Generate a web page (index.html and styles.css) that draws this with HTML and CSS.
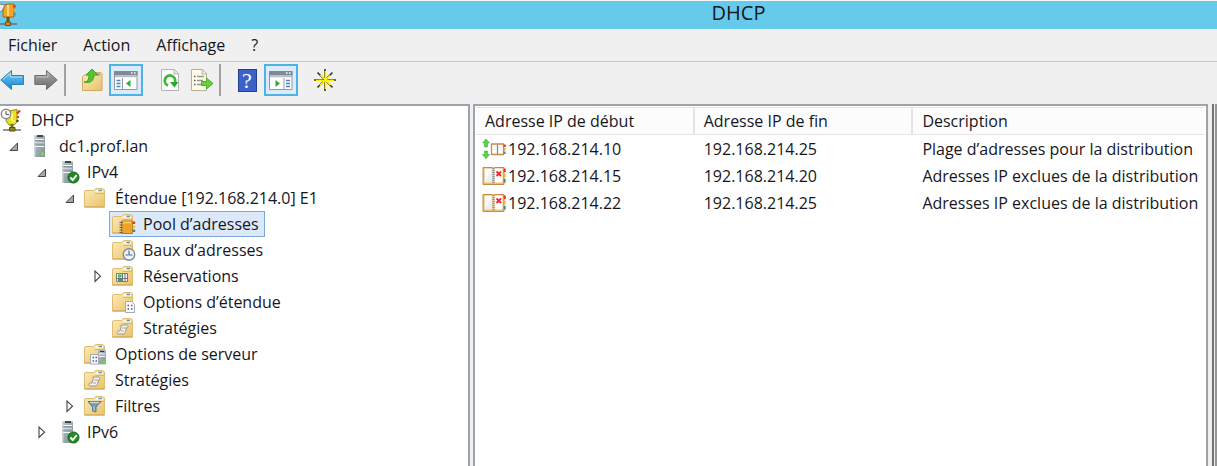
FILE: index.html
```html
<!DOCTYPE html>
<html lang="fr">
<head>
<meta charset="utf-8">
<title>DHCP</title>
<link rel="stylesheet" href="styles.css">
</head>
<body>
<svg class="defs" aria-hidden="true">
  <defs>
    <linearGradient id="gold" x1="0" y1="0" x2="1" y2="1"><stop offset="0" stop-color="#fdebb8"/><stop offset="1" stop-color="#e8c26c"/></linearGradient>
    <linearGradient id="steel" x1="0" y1="0" x2="1" y2="1"><stop offset="0" stop-color="#bcc7cd"/><stop offset="1" stop-color="#7f8e97"/></linearGradient>
    <linearGradient id="blue" x1="0" y1="0" x2="0" y2="1"><stop offset="0" stop-color="#7fd0f8"/><stop offset="1" stop-color="#1482cf"/></linearGradient>
    <linearGradient id="grey" x1="0" y1="0" x2="0" y2="1"><stop offset="0" stop-color="#aaa"/><stop offset="1" stop-color="#6c6c6c"/></linearGradient>
    <symbol id="folder" viewBox="0 0 24 24">
      <path d="M.5 6q0-1.500 1.500-1.500h7.500L11 3q.5-.5 1-.5h7l1.500 1.500v17H.5z" fill="url(#gold)" stroke="#e0bd71"/>
      <path d="M11.500 5h7.500" stroke="#fff8e2" stroke-width="2.400"/><path d="M14.500 4.500h3.500" stroke="#4d9ad8" stroke-width="1.500"/>
      <path d="M11 7.500h9" stroke="#dcb765"/>
      <path d="M.5 21h20" stroke="#cda353"/>
    </symbol>
    <symbol id="tower" viewBox="0 0 24 24">
      <path d="M6 1h11v22H6z" fill="url(#steel)"/><path d="M6 1h1.500v22H6z" fill="#ccd5d9"/>
      <path d="M6 1.500h11" stroke="#d9dfe2"/><path d="M9 2h6" stroke="#1d2427" stroke-width="1.600"/>
      <path d="M7 5.500h9M7 9h9M7 12.500h9" stroke="#f4f8fa" stroke-width="1.200"/>
      <path d="M7 6.500h9M7 10h9" stroke="#7f8d95" stroke-width=".8"/>
      <circle cx="14.500" cy="20" r="1.800" fill="#63ef19"/>
    </symbol>
    <symbol id="tower-ok" viewBox="0 0 24 24">
      <use href="#tower" width="24" height="24"/>
      <circle cx="17.500" cy="17.500" r="5.500" fill="#218c21" stroke="#126512"/><path d="m14.400 17.500 2.300 2.500 4-4.800" fill="none" stroke="#fff" stroke-width="1.900"/>
    </symbol>
    <symbol id="dhcp-title" viewBox="0 0 24 24">
      <path d="M4 2 8 1h6v13H3V9z" fill="#efa62a" stroke="#a66b16"/><path d="M8 2v11" stroke="#ffd66e" stroke-width="2"/>
      <path d="M0 1l5 1-3 6-2 1" fill="#e7edf0" stroke="#74818a"/>
      <path d="M14.500 2v2.500" stroke="#e33" stroke-width="2.400"/><path d="M14.500 6v2.500" stroke="#dabd23" stroke-width="2.400"/><path d="M14.500 10v2.500" stroke="#3d9dad" stroke-width="2.400"/>
      <path d="M8 14v5" stroke="#784b13" stroke-width="3"/><path d="M0 21h17" stroke="#6d7375" stroke-width="1.600"/><path d="M5.500 19h5v3.500h-5z" fill="#d28a19" stroke="#6c501f"/>
    </symbol>
    <symbol id="dhcp" viewBox="0 0 24 24">
      <path d="M8 3 17 1.500v12.500l-3 3H9l-3-4z" fill="#e9df1c" stroke="#938912"/><path d="M12 5v7l3 2" fill="none" stroke="#fff889" stroke-width="2"/>
      <circle cx="6" cy="6" r="4.700" fill="#f7f8f8" stroke="#888" stroke-width="1.400"/><path d="M6 3v3.500h3" fill="none" stroke="#555"/>
      <path d="m17 5.500 3-3" stroke="#ed2525" stroke-width="2.200"/><path d="M17 9h2" stroke="#ee3030" stroke-width="2"/><path d="M16.500 13h2" stroke="#333" stroke-width="2"/>
      <path d="M12 16v4" stroke="#77721b" stroke-width="3"/><path d="M3 22h18" stroke="#888" stroke-width="1.800"/><path d="M9.500 19.500h5.500v3.500H9.500z" fill="#8c8517" stroke="#545017"/>
    </symbol>
    <symbol id="pool" viewBox="0 0 24 24">
      <use href="#folder" width="24" height="24"/>
      <path d="M9.500 9h11v12.500h-11z" fill="#eda32b" stroke="#c47c19"/><path d="M11 10.500h8" stroke="#ffd065" stroke-width="1.600"/>
      <path d="M7.500 10.500h3M7.500 13h3M7.500 15.500h3M7.500 18h3M7.500 20.500h3" stroke="#6b5a45"/>
      <path d="M22 9.500v2.500" stroke="#e33434" stroke-width="2.400"/><path d="M22 13.500V16" stroke="#ebc41c" stroke-width="2.400"/><path d="M22 17.500V20" stroke="#3c88a5" stroke-width="2.400"/>
    </symbol>
    <symbol id="leases" viewBox="0 0 24 24">
      <use href="#folder" width="24" height="24"/>
      <circle cx="17" cy="16.500" r="5.700" fill="#eef5fa" stroke="#7c8c98" stroke-width="1.400"/><path d="M17 12.500v4.500h3.500M13.500 17H16" fill="none" stroke="#486c88" stroke-width="1.200"/>
    </symbol>
    <symbol id="reservations" viewBox="0 0 24 24">
      <use href="#folder" width="24" height="24"/>
      <path d="M4.500 9.500h11v8h-11z" fill="#f6f6ed" stroke="#777e81"/><path d="M6 10.500h3.500v3H6z" fill="#42b84f"/><path d="M5 14.500h10M10.500 10v7M13 10v7" stroke="#6c787d"/><path d="M6 15h4v2H6z" fill="#56829c"/>
    </symbol>
    <symbol id="sheet" viewBox="0 0 24 24">
      <path d="M13.500 11.500h6l3 3v8h-9z" fill="#fbfbff" stroke="#a9a9b6"/><path d="M15.500 15.500H17M19 15.500h1.500M15.500 19H17M19 19h1.500" stroke="#59597f" stroke-width="1.600"/>
    </symbol>
    <symbol id="options" viewBox="0 0 24 24"><use href="#folder" width="24" height="24"/><use href="#sheet" width="24" height="24"/></symbol>
    <symbol id="server-options" viewBox="0 0 24 24">
      <use href="#folder" width="24" height="24"/>
      <path d="M14.500 8.500h7V22h-7z" fill="url(#steel)" stroke="#a0adb4"/><path d="M16 9.500h4" stroke="#2c3438"/><path d="M15 12h6M15 14.500h6" stroke="#f3f7f8"/><circle cx="19.700" cy="20" r="1.500" fill="#5be91b"/>
      <path d="M6.500 12.500h8v9.500h-8z" fill="#fbfbff" stroke="#a9a9b6"/><path d="M8.500 15.500H10M11.500 15.500H13M8.500 19H10M11.500 19H13" stroke="#59597f" stroke-width="1.600"/>
    </symbol>
    <symbol id="policy" viewBox="0 0 24 24">
      <use href="#folder" width="24" height="24"/>
      <path d="M9 9h5.500c2 0 2 3 0 3l-1 3.500c0 2-1 2.500-2.500 2.500H6.500c-2 0-2-3 0-3H8l1-3.500z" fill="#f4f4ed" stroke="#9a968a"/><path d="M10 12h4.500M9 15h3" stroke="#aaa593"/>
    </symbol>
    <symbol id="filter" viewBox="0 0 24 24">
      <use href="#folder" width="24" height="24"/>
      <path d="M4 7.500h13l-5 5.500v5l-3.500-1v-4z" fill="#7899b1" stroke="#587890"/><path d="M6 8.500h9" stroke="#c6dce8" stroke-width="1.400"/><path d="M10 12v5" stroke="#c4d7e1"/>
    </symbol>
    <symbol id="book" viewBox="0 0 24 20">
      <path d="M1 1.500h9.500l1 .7 1-.7H22v17H1z" fill="#f0bd78" stroke="#c98a3c"/><path d="M2.500 2.500h8v14h-8z" fill="#e9f0f2"/><path d="M12.500 2.500h8v14h-8z" fill="#fff"/><path d="M3 3v12l6-9V3z" fill="#fafcfc"/>
      <path d="M11.500 2v16" stroke="#8e9497" stroke-width="2.400" stroke-dasharray="1 1"/><path d="m14.500 5.500 4.500 4.500m0-4.500-4.500 4.500" stroke="#ef2732" stroke-width="1.800"/>
      <path d="M22.700 2.500v3.500" stroke="#ec2929" stroke-width="2"/><path d="M22.700 8v3.500" stroke="#eac12d" stroke-width="2"/><path d="M22.700 13v3.500" stroke="#348eae" stroke-width="2"/>
    </symbol>
    <symbol id="range" viewBox="0 0 24 20">
      <path d="M4 0 .5 4H2.500v4h3V4h2zM2.500 12h3v3.500h2L4 19.800.5 15.500h2z" fill="#61d04a" stroke="#45ad35" stroke-width=".6"/>
      <path d="M9.500 5h12v10.500h-12z" fill="#fff" stroke="#c58a43" stroke-width="1.300"/><path d="M15.500 5.500v9.500" stroke="#858b91" stroke-width="1.300"/><path d="M11.500 8h2M11.500 10h2M17.500 8h2M17.500 10h2" stroke="#dce6ed"/>
      <path d="M22.700 5.500v2.500" stroke="#e43232" stroke-width="2"/><path d="M22.700 9v2.500" stroke="#e2b827" stroke-width="2"/><path d="M22.700 12.500V15" stroke="#3498b8" stroke-width="2"/>
    </symbol>
    <symbol id="collapse" viewBox="0 0 10 12"><path d="M8.500 3v7.500H1z" fill="#a8a8a8" stroke="#444"/></symbol>
    <symbol id="expand" viewBox="0 0 10 14"><path d="M2 2v10.500l5.500-5.300z" fill="#fff" stroke="#444" stroke-width="1.100"/></symbol>
  </defs>
</svg>

<div class="window">
  <header class="titlebar">
    <svg class="icon titlebar-icon" aria-hidden="true"><use href="#dhcp-title"/></svg>
    <h1 class="titlebar-text">DHCP</h1>
  </header>

  <nav class="menubar">
    <button class="menu">Fichier</button>
    <button class="menu">Action</button>
    <button class="menu">Affichage</button>
    <button class="menu">?</button>
  </nav>

  <div class="toolbar">
    <div class="tool-history">
      <button class="tool tool-nav" aria-label="Précédent"><svg class="icon" viewBox="0 0 24 24"><path d="M.8 12 11.500 2.500v5h12v9h-12v5z" fill="url(#blue)" stroke="#2582bd"/><path d="M3 11.500 10.500 5v4H22" fill="none" stroke="#a8e1fb"/></svg></button>
      <button class="tool tool-nav" aria-label="Suivant"><svg class="icon" viewBox="0 0 24 24"><path d="M23.200 12 12.500 2.500v5H.8v9h11.700v5z" fill="url(#grey)" stroke="#707070"/><path d="M2 9h12V5" fill="none" stroke="#c4c4c4"/></svg></button>
    </div>
    <span class="separator"></span>
    <button class="tool" aria-label="Dossier parent"><svg class="icon" viewBox="0 0 24 24"><path d="M2.500 8.500 4 7h8l2-2.500h7l1 1V22.500H2.500z" fill="url(#gold)" stroke="#d2aa5c"/><path d="M16 6.500h4" stroke="#4e9add" stroke-width="1.600"/><path d="M4 14c4 0 5-3 5-7H6l6-6 6 6h-4c0 5-3 9-10 7z" fill="#55c52e" stroke="#3aa32a"/></svg></button>
    <button class="tool tool-on" aria-label="Afficher l'arborescence" aria-pressed="true"><svg class="icon" viewBox="0 0 24 24"><path d="M.5 3.500h22.500v18H.5z" fill="#fff" stroke="#9299a0"/><path d="M0 3h23.500v4.500H0z" fill="#7f8a95"/><path d="M1 8.500h22" stroke="#b6bec6" stroke-width="1.500"/><path d="M8.500 10v11" stroke="#9299a0"/><path d="M2.500 12.500h4M2.500 15.500h4M2.500 18.500h4" stroke="#4982bb" stroke-width="1.400"/><path d="M16.500 12v7L12 15.500z" fill="#2cae2c"/><path d="M17 5h1.500M20 5h1.500" stroke="#fff" stroke-width="1.600"/></svg></button>
    <span class="tool-gap"></span>
    <button class="tool" aria-label="Actualiser"><svg class="icon" viewBox="0 0 24 24"><path d="M3.500 1.500h13l4 4v17h-17z" fill="#fff" stroke="#b4b4b4"/><path d="M16 2v4h4" fill="#e3e3e3" stroke="#b4b4b4"/><path d="M10 17.500A5.200 5.200 0 1 1 17 14" fill="none" stroke="#3ab83a" stroke-width="2.800"/><path d="M12 14h8.500l-4 5.500z" fill="#2aa62e"/></svg></button>
    <button class="tool" aria-label="Exporter la liste"><svg class="icon" viewBox="0 0 24 24"><path d="M1.500 1.500h11l4 4v17h-15z" fill="#fffdea" stroke="#b4b09a"/><path d="M12 2v4h4" fill="#eee" stroke="#b4b09a"/><path d="M4 8.500h1.500M4 12.500h1.500M4 16.500h1.500" stroke="#5a5a5a" stroke-width="1.500"/><path d="M7 8.500h7M7 12.500h6M7 16.500h5" stroke="#969690" stroke-width="1.300"/><path d="M11.500 13.500h5V10l6.500 5.500-6.500 5.500v-3.500h-5z" fill="#65cf36" stroke="#4fb036"/></svg></button>
    <span class="separator"></span>
    <button class="tool tool-help" aria-label="Aide"><span class="help-glyph">?</span></button>
    <button class="tool tool-on" aria-label="Afficher le volet Actions" aria-pressed="true"><svg class="icon" viewBox="0 0 24 24"><path d="M.5 3.500h22.500v18H.5z" fill="#fff" stroke="#9299a0"/><path d="M0 3h23.500v4.500H0z" fill="#7f8a95"/><path d="M1 8.500h22" stroke="#b6bec6" stroke-width="1.500"/><path d="M15 10v11" stroke="#9299a0"/><path d="M17 12.500h4M17 15.500h4M17 18.500h4" stroke="#4982bb" stroke-width="1.400"/><path d="M6.500 12v7l4.500-3.500z" fill="#2cae2c"/><path d="M17 5h1.500M20 5h1.500" stroke="#fff" stroke-width="1.600"/></svg></button>
    <span class="tool-gap"></span>
    <button class="tool" aria-label="Nouvelle étendue"><svg class="icon" viewBox="0 0 24 24"><path d="M12 1v22M1 12h22M4.500 4.500l15 15M19.500 4.500l-15 15" stroke="#3e3c18" stroke-width="1.700"/><path d="M12.500 3v18M3 12.500h18M7.500 7l10 10M17 7.500l-10 10" stroke="#fff200" stroke-width="1.600"/></svg></button>
  </div>

  <main class="panes">
    <section class="pane tree-pane" aria-label="Arborescence">
      <ul class="tree">
        <li>
          <div class="row"><span class="item item-root"><svg class="icon" aria-hidden="true"><use href="#dhcp"/></svg>DHCP</span></div>
          <ul class="tree">
            <li>
              <div class="row"><button class="toggle" aria-label="Réduire"><svg class="arrow-open"><use href="#collapse"/></svg></button><span class="item"><svg class="icon" aria-hidden="true"><use href="#tower"/></svg>dc1.prof.lan</span></div>
              <ul class="tree branch">
                <li>
                  <div class="row"><button class="toggle" aria-label="Réduire"><svg class="arrow-open"><use href="#collapse"/></svg></button><span class="item"><svg class="icon" aria-hidden="true"><use href="#tower-ok"/></svg>IPv4</span></div>
                  <ul class="tree branch">
                    <li>
                      <div class="row"><button class="toggle" aria-label="Réduire"><svg class="arrow-open"><use href="#collapse"/></svg></button><span class="item"><svg class="icon" aria-hidden="true"><use href="#folder"/></svg>Étendue [192.168.214.0] E1</span></div>
                      <ul class="tree branch">
                        <li class="row"><span class="toggle"></span><span class="item item-selected"><svg class="icon" aria-hidden="true"><use href="#pool"/></svg>Pool d’adresses</span></li>
                        <li class="row"><span class="toggle"></span><span class="item"><svg class="icon" aria-hidden="true"><use href="#leases"/></svg>Baux d’adresses</span></li>
                        <li class="row"><button class="toggle" aria-label="Développer"><svg class="arrow-closed"><use href="#expand"/></svg></button><span class="item"><svg class="icon" aria-hidden="true"><use href="#reservations"/></svg>Réservations</span></li>
                        <li class="row"><span class="toggle"></span><span class="item"><svg class="icon" aria-hidden="true"><use href="#options"/></svg>Options d’étendue</span></li>
                        <li class="row"><span class="toggle"></span><span class="item"><svg class="icon" aria-hidden="true"><use href="#policy"/></svg>Stratégies</span></li>
                      </ul>
                    </li>
                    <li class="row"><span class="toggle"></span><span class="item"><svg class="icon" aria-hidden="true"><use href="#server-options"/></svg>Options de serveur</span></li>
                    <li class="row"><span class="toggle"></span><span class="item"><svg class="icon" aria-hidden="true"><use href="#policy"/></svg>Stratégies</span></li>
                    <li class="row"><button class="toggle" aria-label="Développer"><svg class="arrow-closed"><use href="#expand"/></svg></button><span class="item"><svg class="icon" aria-hidden="true"><use href="#filter"/></svg>Filtres</span></li>
                  </ul>
                </li>
                <li class="row"><button class="toggle" aria-label="Développer"><svg class="arrow-closed"><use href="#expand"/></svg></button><span class="item"><svg class="icon" aria-hidden="true"><use href="#tower-ok"/></svg>IPv6</span></li>
              </ul>
            </li>
          </ul>
        </li>
      </ul>
    </section>

    <section class="pane list-pane" aria-label="Pool d’adresses">
      <table class="list">
        <colgroup><col class="col-address"><col class="col-address"><col></colgroup>
        <thead><tr><th scope="col">Adresse IP de début</th><th scope="col">Adresse IP de fin</th><th scope="col">Description</th></tr></thead>
        <tbody>
          <tr><td class="cell-icon"><span class="address"><svg class="list-icon" aria-hidden="true"><use href="#range"/></svg>192.168.214.10</span></td><td>192.168.214.25</td><td>Plage d’adresses pour la distribution</td></tr>
          <tr><td class="cell-icon"><span class="address"><svg class="list-icon" aria-hidden="true"><use href="#book"/></svg>192.168.214.15</span></td><td>192.168.214.20</td><td>Adresses IP exclues de la distribution</td></tr>
          <tr><td class="cell-icon"><span class="address"><svg class="list-icon" aria-hidden="true"><use href="#book"/></svg>192.168.214.22</span></td><td>192.168.214.25</td><td>Adresses IP exclues de la distribution</td></tr>
        </tbody>
      </table>
    </section>
    <div class="window-edge"></div>
  </main>
</div>
</body>
</html>
```
FILE: styles.css
```css
* {
  box-sizing: border-box;
}

body {
  margin: 0;
  background: #f0f0f0;
  color: #16161e;
  font-family: "Open Sans", "Noto Sans", sans-serif;
  font-size: 16px;
  line-height: 20px;
}

button {
  border: 0;
  padding: 0;
  background: none;
  color: inherit;
  font: inherit;
}

.defs {
  position: absolute;
  width: 0;
  height: 0;
}

.icon {
  display: block;
  flex: none;
  width: 24px;
  height: 24px;
}

.window {
  display: flex;
  flex-direction: column;
  min-height: 100vh;
  border-top: 1px solid #f4fafc;
}

.titlebar {
  display: grid;
  grid-template-columns: 24px 1fr;
  align-items: center;
  height: 28px;
  background: #66caea;
}

.titlebar-text {
  margin: 0;
  padding: 0 24px 4px 260px;
  font-size: 20px;
  font-weight: 400;
  line-height: 24px;
  text-align: center;
}

.menubar {
  display: flex;
  gap: 26px;
  height: 33px;
  padding: 0 8px;
  border-bottom: 1px solid #c6c7ca;
}

.toolbar {
  display: flex;
  align-items: center;
  gap: 2px;
  height: 42px;
  padding-bottom: 6px;
}

.tool-history {
  display: flex;
  gap: 10px;
  padding-right: 4px;
}

.tool {
  display: flex;
  align-items: center;
  justify-content: center;
  width: 30px;
  height: 32px;
}

.tool-nav {
  width: 24px;
}

.tool-on {
  width: 34px;
  border: 2px solid #4fb2e4;
  background: #dcebfc;
}

.tool-gap {
  width: 8px;
}

.separator {
  width: 2px;
  height: 32px;
  margin-right: 9px;
  background: #a2a2a2;
}

.help-glyph {
  width: 19px;
  height: 23px;
  border: 1px solid #27408d;
  background: #3b62cb;
  color: #fff;
  font: 22px/21px "Liberation Serif", serif;
  text-align: center;
}

.panes {
  display: grid;
  grid-template-columns: 470fr 738fr 9px;
  flex: 1;
}

.pane {
  min-width: 0;
  border: solid #9ea2ab;
  background: #fff;
}

.tree-pane {
  padding-top: 1px;
  border-width: 2px 2px 0 0;
}

.list-pane {
  margin-left: 3px;
  padding: 1px;
  border-width: 2px 2px 0;
}

.window-edge {
  margin-left: 4px;
  border-left: 2px solid #727272;
  border-right: 2px solid #969696;
}

.tree {
  margin: 0;
  padding: 0;
  list-style: none;
}

.branch {
  padding-left: 28px;
}

.row {
  display: flex;
  align-items: center;
  height: 26px;
}

.toggle {
  display: flex;
  align-items: center;
  justify-content: center;
  width: 25px;
  height: 24px;
  padding-left: 2px;
}

.arrow-open {
  width: 10px;
  height: 12px;
}

.arrow-closed {
  width: 10px;
  height: 14px;
}

.item {
  display: flex;
  align-items: center;
  gap: 7px;
  height: 26px;
  padding: 0 5px 0 2px;
  border: 1px solid transparent;
  white-space: nowrap;
}

.item-root {
  padding-left: 0;
  border-left: 0;
}

.item-selected {
  border-color: #7ba9de;
  background: #dbe9fb;
}

.list {
  width: 100%;
  border-collapse: separate;
  border-spacing: 0;
  table-layout: fixed;
}

.col-address {
  width: 30%;
}

.list th {
  height: 28px;
  padding: 0 8px 0 9px;
  border: solid #e4e4e4;
  border-width: 1px 2px 1px 0;
  background: #fcfcfc;
  font-weight: 400;
  text-align: left;
}

.list th:last-child {
  border-right: 0;
}

.list td {
  height: 27px;
  padding: 0 0 0 9px;
  white-space: nowrap;
}

.list .cell-icon {
  padding-left: 6px;
}

.address {
  display: flex;
  align-items: center;
  gap: 2px;
}

.list-icon {
  flex: none;
  width: 24px;
  height: 20px;
}
```
